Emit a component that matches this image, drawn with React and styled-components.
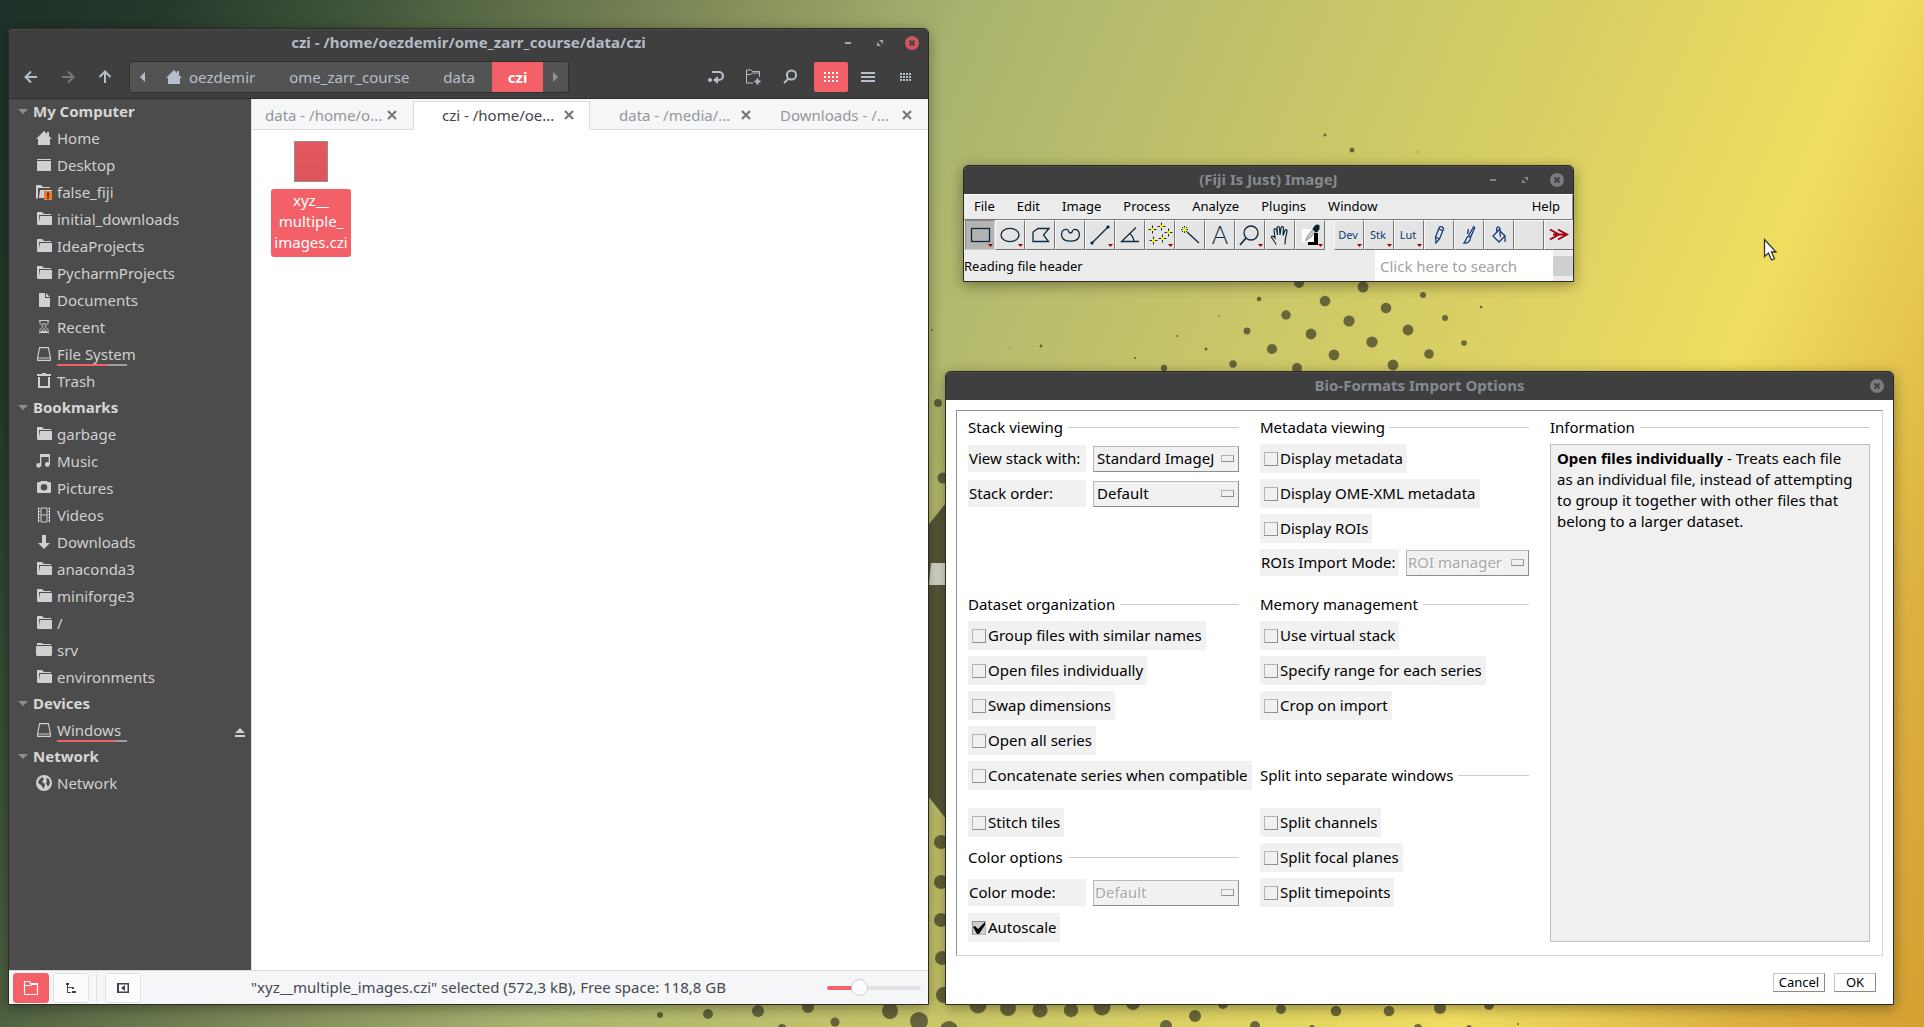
import React from "react";
import styled, { createGlobalStyle, css } from "styled-components";

const RED = "#f46067";
const FONT = '"Noto Sans", "Open Sans", sans-serif';

const GlobalStyle = createGlobalStyle`
  *, *::before, *::after { box-sizing: border-box; }
  body { margin: 0; font-family: ${FONT}; font-size: 15px; }
  button, input, select { font-family: inherit; font-size: inherit; margin: 0; }
  ul { list-style: none; margin: 0; padding: 0; }
  a { color: inherit; text-decoration: none; }
  svg { display: block; flex: none; }
`;

/* ---------- desktop ---------- */

const Desktop = styled.main`
  position: relative;
  height: 100vh;
  overflow: hidden;
  background: linear-gradient(113deg, #1d3128 0%, #25392b 7%, #40543a 15%, #576845 20%, #808b59 30%,
    #a9b36f 41%, #c3c36a 55%, #ddd263 70%, #f0dd60 80%, #e6c850 86%, #dcb040 92%, #d5a032 100%);
`;

const Wallpaper = styled.svg`
  position: absolute;
  inset: 0;
`;

const Cursor = styled.svg`
  position: absolute;
  left: 1763px;
  top: 238px;
`;

const DOTS = [
  [1325, 135, 1.5], [1352, 150, 2.5], [1418, 152, 0.7], [1299, 283, 5], [1363, 287, 5.5], [1423, 295, 3],
  [1259, 299, 2.3], [1325, 301, 5.3], [1386, 308, 5.3], [1481, 307, 1.3], [1286, 315, 4.7], [1349, 321, 5.6],
  [1445, 318, 3], [1219, 316, 0.8], [1408, 330, 5.4], [1247, 331, 3.4], [1311, 334, 5.4], [1464, 343, 2.8],
  [1177, 336, 0.9], [1372, 342, 5.6], [1041, 346, 1.4], [1206, 349, 1.5], [1272, 349, 5.1], [1334, 355, 5.4],
  [1429, 354, 4.8], [1135, 358, 1], [1233, 364, 3.7], [1297, 368, 5], [1393, 365, 5.4], [1164, 368, 3.2],
  [1010, 348, 0.6], [932, 330, 1], [938, 403, 4], [943, 478, 5.5], [660, 1015, 3], [708, 1014, 5],
  [758, 1011, 6], [808, 1007, 6], [835, 1022, 4.5], [890, 1011, 8], [919, 1021, 9], [782, 1028, 4],
  [949, 1030, 9], [978, 1005, 8.5], [1008, 1008, 8], [1040, 1010, 7.6], [1071, 1010, 7.2], [1102, 1007, 8.5],
  [1133, 1003, 7], [1166, 1026, 6], [1195, 1016, 6], [1223, 1004, 5], [1255, 1026, 5], [1281, 1009, 5],
  [1336, 1011, 5.3], [1389, 1011, 5.3], [1440, 1008, 6], [1489, 1005, 5], [1518, 1024, 1], [1312, 1028, 3],
  [1418, 1028, 4], [1469, 1028, 3], [941, 842, 7], [941, 882, 7], [941, 920, 7], [942, 958, 7], [944, 995, 8],
];

/* ---------- window chrome ---------- */

const Window = styled.section`
  position: absolute;
  display: flex;
  flex-direction: column;
  border: 1px solid #2b2b24;
  border-radius: 5px 5px 0 0;
  overflow: hidden;
  box-shadow: 0 3px 14px rgba(0, 0, 0, 0.38);
`;

const FileManagerWindow = styled(Window)`
  left: 8px;
  top: 28px;
  bottom: 22px;
  width: min(921px, calc(100% - 16px));
  background: #fff;
`;

const ImageJWindow = styled(Window)`
  left: 963px;
  top: 165px;
  width: 611px;
  background: #ececec;
`;

const DialogWindow = styled(Window)`
  left: 945px;
  right: 30px;
  top: 371px;
  bottom: 22px;
  background: #fff;
`;

const TitleBar = styled.header`
  display: grid;
  grid-template-columns: 1fr auto 1fr;
  align-items: center;
  height: ${(p) => p.$height || 28}px;
  padding: 0 6px ${(p) => (p.$active ? 2 : 0)}px;
  background: #3f3f3f;
  box-shadow: inset 0 1px 0 #4a4a4a;
  color: ${(p) => (p.$active ? "#b4bac6" : "#868a90")};
  flex: none;
`;

const Title = styled.h1`
  grid-column: 2;
  margin: 0;
  padding-bottom: 2px;
  font-size: 15px;
  font-weight: 700;
  line-height: 22px;
  white-space: nowrap;
`;

const WindowButtons = styled.div`
  display: flex;
  justify-content: flex-end;
  gap: 12px;
`;

const PlainButton = styled.button`
  display: flex;
  align-items: center;
  justify-content: center;
  padding: 0;
  border: 0;
  background: none;
  color: inherit;
`;

const WindowButton = styled(PlainButton)`
  width: 20px;
  height: 20px;
`;

function Chrome({ title, active, closeOnly, height }) {
  const c = active ? "#a5a7ab" : "#85878a";
  return (
    <TitleBar $active={active} $height={height}>
      <Title>{title}</Title>
      <WindowButtons>
        {!closeOnly && (
          <>
            <WindowButton aria-label="Minimize">
              <svg width="16" height="16"><rect x="5" y="7" width="6" height="2" fill={c} /></svg>
            </WindowButton>
            <WindowButton aria-label="Maximize">
              <svg width="16" height="16" fill={c}><path d="M7 5h4v4zM5 7v4h4z" /></svg>
            </WindowButton>
          </>
        )}
        <WindowButton aria-label="Close">
          <svg width="16" height="16">
            <circle cx="8" cy="8" r="7" fill={active ? "#cf565d" : "#797b7e"} />
            <path d="M5.5 5.5l5 5M10.5 5.5l-5 5" stroke="#3f3f3f" strokeWidth="1.8" />
          </svg>
        </WindowButton>
      </WindowButtons>
    </TitleBar>
  );
}

/* ---------- file manager ---------- */

const Toolbar = styled.div`
  display: flex;
  align-items: center;
  padding: 3px 6px 5px 3px;
  background: #3f3f3f;
  border-bottom: 1px solid #2d2d2d;
  color: #b7becb;
  flex: none;
`;

const NavButton = styled(PlainButton)`
  width: 37px;
  height: 32px;
  color: ${(p) => (p.disabled ? "#75787d" : "inherit")};
`;

const Breadcrumb = styled.nav`
  display: flex;
  height: 32px;
  margin: 0 auto 0 6px;
  border: 1px solid #2f2f2f;
  border-radius: 3px;
  background: #535353;
  overflow: hidden;
`;

const CrumbArrow = styled(PlainButton)`
  width: 25px;
  color: ${(p) => (p.disabled ? "#909399" : "#b7becb")};
`;

const Crumb = styled.a`
  display: flex;
  align-items: center;
  gap: 7px;
  padding: 0 17px 1px;
  line-height: 22px;
  ${(p) => p.$first && css`padding-left: 11px;`}
  ${(p) => p.$current && css`padding: 0 16px 1px; background: ${RED}; color: #fff; font-weight: 700;`}
`;

const ToolGroup = styled.div`
  display: flex;
  gap: 3px;
  margin-left: 7px;
`;

const ToolButton = styled(PlainButton)`
  width: 34px;
  height: 30px;
  border-radius: 2px;
  ${(p) => p.$on && css`background: ${RED}; color: #fff;`}
`;

const FmBody = styled.div`
  display: grid;
  grid-template-columns: 242px 1fr;
  flex: 1;
  min-height: 0;
`;

const Sidebar = styled.nav`
  background: #4c4c4c;
  color: #d0d0d0;
  overflow: hidden;
`;

const GroupTitle = styled.h2`
  display: flex;
  align-items: center;
  gap: 5px;
  height: 26px;
  margin: 0;
  padding: 0 0 2px 9px;
  font-size: 15px;
  line-height: 22px;
  font-weight: 700;
  color: #d6d6d6;
`;

const Place = styled.li`
  display: flex;
  align-items: center;
  justify-content: space-between;
  height: 27px;
  padding: 0 4px 2px 27px;
`;

const PlaceLink = styled.a`
  display: flex;
  align-items: center;
  gap: 5px;
  line-height: 22px;
`;

const PlaceLabel = styled.span`
  position: relative;
`;

const Usage = styled.span`
  position: absolute;
  left: 0;
  bottom: -1px;
  width: 70px;
  height: 2px;
  background: linear-gradient(to right, ${RED} ${(p) => p.$used}%, #9ba0a8 ${(p) => p.$used}%);
`;

const EjectButton = styled(PlainButton)`
  padding-top: 4px;
`;

const Content = styled.div`
  display: flex;
  flex-direction: column;
  min-width: 0;
  border-left: 1px solid #dcdfe3;
`;

const Tabs = styled.div`
  display: grid;
  grid-template-columns: 161fr 177fr 177fr 161fr;
  height: 31px;
  padding-top: 2px;
  background: #f5f6f8;
  flex: none;
`;

const Tab = styled.div`
  display: flex;
  align-items: center;
  justify-content: space-between;
  padding: 0 11px 1px ${(p) => (p.$wide ? 28 : 12)}px;
  border: 1px solid transparent;
  border-bottom-color: #d9dce2;
  color: #93969c;
  min-width: 0;
  ${(p) => p.$active && css`background: #fff; border-color: #d9dce2; border-bottom-color: #fff; color: #3f444d;`}
`;

const TabButton = styled(PlainButton)`
  line-height: 22px;
  white-space: nowrap;
`;

const TabClose = styled(PlainButton)`
  width: 18px;
  height: 18px;
  color: #74777c;
`;

const Files = styled.div`
  flex: 1;
  padding: 11px 19px;
`;

const FileItem = styled.figure`
  display: flex;
  flex-direction: column;
  align-items: center;
  gap: 7px;
  width: 80px;
  margin: 0;
`;

const FileThumb = styled.div`
  width: 34px;
  height: 41px;
  border: 1px solid #8d8f90;
  background: linear-gradient(#e4585f, #dc565c);
`;

const FileName = styled.figcaption`
  width: 80px;
  padding: 1px 0 4px;
  border-radius: 3px;
  background: ${RED};
  color: #fff;
  line-height: 21px;
  text-align: center;
`;

const StatusBar = styled.footer`
  display: flex;
  align-items: center;
  height: 34px;
  padding: 0 7px 0 4px;
  border-top: 1px solid #d5d8dc;
  background: #f5f6f8;
  color: #444951;
  flex: none;
`;

const ToggleButton = styled(PlainButton)`
  width: 36px;
  height: 30px;
  margin-right: 4px;
  border: 1px solid ${(p) => (p.$on ? RED : "#e0e2e6")};
  border-radius: 3px;
  background: ${(p) => (p.$on ? RED : "#fcfcfd")};
  color: ${(p) => (p.$on ? "#fff" : "#3f444d")};
`;

const Divider = styled.span`
  width: 1px;
  height: 28px;
  margin: 0 8px 0 3px;
  background: #dcdfe3;
`;

const StatusText = styled.p`
  flex: 1;
  margin: 0 0 0 106px;
  padding-bottom: 2px;
  line-height: 22px;
`;

const Slider = styled.input`
  appearance: none;
  width: 94px;
  height: 18px;
  background: none;
  &::-webkit-slider-runnable-track {
    height: 4px;
    border-radius: 2px;
    background: linear-gradient(to right, ${RED} 34%, #e2e3e5 34%);
  }
  &::-webkit-slider-thumb {
    appearance: none;
    width: 17px;
    height: 17px;
    margin-top: -7px;
    border: 1px solid #c9ccd1;
    border-radius: 50%;
    background: #fdfdfd;
  }
`;

const HomeGlyph = () => (
  <svg width="16" height="16" fill="currentColor"><path d="M8 1L0 9h2v6h12V9h2l-3-3V2h-2v2z" /></svg>
);

const placeIcons = {
  home: <HomeGlyph />,
  desktop: (
    <svg width="16" height="16" fill="currentColor"><path d="M1 2h14v1H1zM1 4h14v10H1z" /></svg>
  ),
  warn: (
    <svg width="16" height="16" fill="currentColor">
      <path d="M0 1h5l2 2h7v1H2v10l-2 1zM4 6h12v8H3z" />
      <rect x="8" y="7" width="8" height="9" fill="#ef7a2d" />
      <path d="M11 8.5h2v4h-2zM11 13.3h2v1.4h-2z" fill="#4c3020" />
    </svg>
  ),
  folder: (
    <svg width="16" height="16" fill="currentColor"><path d="M1 1h5l2 2h7v1H3v10H2l-1-1zM4 5h12v8.5l-.5.5H2.5z" /></svg>
  ),
  closed: (
    <svg width="16" height="16" fill="currentColor"><path d="M1 1h5l1 1h8v1H1zM0 4h16v9l-1 1H1l-1-1z" /></svg>
  ),
  doc: (
    <svg width="16" height="16" fill="currentColor"><path d="M3 1h6v5h5v9H3zM10 1l4 4h-4z" /></svg>
  ),
  recent: (
    <svg width="16" height="16" fill="none" stroke="currentColor" strokeWidth="1">
      <path d="M3 1.500h10M3 13.500h10M4 2v2.500l3 3-3 3V13M12 2v2.500l-3 3 3 3V13" /><path d="M6 5h4M5.500 12.500L8 9.500l2.500 3z" />
    </svg>
  ),
  drive: (
    <svg width="16" height="16" fill="none" stroke="currentColor" strokeWidth="1.1">
      <path d="M3.6 1.6h8.8l2 10v2.8H1.6v-2.8zM1.6 12h12.8" />
    </svg>
  ),
  trash: (
    <svg width="16" height="16" fill="currentColor"><path d="M6 0h4v1h5v2H1V1h5zM2 4h2v9h8V4h2v11H2z" /></svg>
  ),
  music: (
    <svg width="16" height="16" fill="currentColor"><path d="M4 1h10v3H5.300v9H4zM12.700 2H14v9h-1.300z" /><circle cx="2.700" cy="12.300" r="2.400" /><circle cx="11.300" cy="11.500" r="2.400" /></svg>
  ),
  camera: (
    <svg width="16" height="16" fill="currentColor"><path fillRule="evenodd" d="M5 1h6l1 1h2l1 1v9l-1 1H2l-1-1V3l1-1h2zM8 4a3.300 3.300 0 100 6.600 3.300 3.300 0 000-6.600z" /></svg>
  ),
  video: (
    <svg width="16" height="16" fill="none" stroke="currentColor">
      <path d="M2.500 .5v15M13.500 .5v15M5 1v14M11 1v14M5 1h6M5 8h6M5 15h6" strokeWidth="1" /><path d="M3.700 1v15M12.300 1v15" strokeDasharray="1 2" />
    </svg>
  ),
  down: (
    <svg width="16" height="16" fill="currentColor"><path d="M6 1h4v8h4l-6 6-6-6h4z" /></svg>
  ),
  globe: (
    <svg width="16" height="16">
      <circle cx="8" cy="8" r="8" fill="currentColor" />
      <path d="M3 5l3-3 2 2-2 3 3 2-1 5-3-4-3-2zM10 3l3 1 1 4-2 4-2-4 1-2z" fill="#4c4c4c" />
    </svg>
  ),
};

const PLACES = [
  {
    title: "My Computer",
    items: [
      ["home", "Home"], ["desktop", "Desktop"], ["warn", "false_fiji"], ["folder", "initial_downloads"],
      ["folder", "IdeaProjects"], ["folder", "PycharmProjects"], ["doc", "Documents"], ["recent", "Recent"],
      ["drive", "File System", 73], ["trash", "Trash"],
    ],
  },
  {
    title: "Bookmarks",
    items: [
      ["folder", "garbage"], ["music", "Music"], ["camera", "Pictures"], ["video", "Videos"], ["down", "Downloads"],
      ["folder", "anaconda3"], ["folder", "miniforge3"], ["folder", "/"], ["closed", "srv"], ["folder", "environments"],
    ],
  },
  { title: "Devices", items: [["drive", "Windows", 83, true]] },
  { title: "Network", items: [["globe", "Network"]] },
];

const TABS = [
  { label: "data - /home/o..." },
  { label: "czi - /home/oe...", active: true, wide: true },
  { label: "data - /media/...", wide: true },
  { label: "Downloads - /..." },
];

const Dots = ({ step, size, cols, rows }) => (
  <svg width={step * cols - step + size} height={step * rows - step + size} fill="currentColor">
    {Array.from({ length: cols * rows }, (_, i) => (
      <rect key={i} x={(i % cols) * step} y={Math.floor(i / cols) * step} width={size} height={size} />
    ))}
  </svg>
);

function FileManager() {
  return (
    <FileManagerWindow aria-label="File manager">
      <Chrome title="czi - /home/oezdemir/ome_zarr_course/data/czi" active height={29} />
      <Toolbar>
        <NavButton aria-label="Back">
          <svg width="16" height="16" fill="none" stroke="currentColor" strokeWidth="2"><path d="M14 8H3M8 2.500L2.500 8 8 13.500" /></svg>
        </NavButton>
        <NavButton aria-label="Forward" disabled>
          <svg width="16" height="16" fill="none" stroke="currentColor" strokeWidth="2"><path d="M2 8h11M8 2.500L13.500 8 8 13.500" /></svg>
        </NavButton>
        <NavButton aria-label="Up">
          <svg width="16" height="16" fill="none" stroke="currentColor" strokeWidth="2"><path d="M8 14V3M2.500 8L8 2.500 13.500 8" /></svg>
        </NavButton>
        <Breadcrumb aria-label="Path">
          <CrumbArrow aria-label="Scroll left"><svg width="5" height="10" fill="currentColor"><path d="M5 0v10L0 5z" /></svg></CrumbArrow>
          <Crumb href="#oezdemir" $first><HomeGlyph />oezdemir</Crumb>
          <Crumb href="#course">ome_zarr_course</Crumb>
          <Crumb href="#data">data</Crumb>
          <Crumb href="#czi" $current>czi</Crumb>
          <CrumbArrow aria-label="Scroll right" disabled><svg width="5" height="10" fill="currentColor"><path d="M0 0v10l5-5z" /></svg></CrumbArrow>
        </Breadcrumb>
        <ToolGroup>
          <ToolButton aria-label="Toggle location entry">
            <svg width="18" height="16">
              <path d="M5 3h7a4 4 0 010 8h-2" fill="none" stroke="currentColor" strokeWidth="2.200" />
              <path d="M11 7v8l-5-4z" fill="currentColor" /><circle cx="3" cy="11" r="2" fill="currentColor" />
            </svg>
          </ToolButton>
          <ToolButton aria-label="New folder">
            <svg width="16" height="16" fill="none" stroke="currentColor">
              <path d="M14.500 8V2.500h-7l-1-1.500H1.500v13H8M1.500 5.500h4l2-1.500h7" /><path d="M9.500 12.500h6M12.500 9.500v6" strokeWidth="2" />
            </svg>
          </ToolButton>
          <ToolButton aria-label="Search">
            <svg width="16" height="16" fill="none" stroke="currentColor" strokeWidth="2"><circle cx="9.500" cy="6" r="4.600" /><path d="M6.500 9.500L2 14" /></svg>
          </ToolButton>
        </ToolGroup>
        <ToolGroup>
          <ToolButton aria-label="Icon view" $on><Dots step={4} size={2} cols={4} rows={3} /></ToolButton>
          <ToolButton aria-label="List view">
            <svg width="14" height="12" fill="currentColor"><path d="M0 1h14v2H0zM0 5h14v2H0zM0 9h14v2H0z" /></svg>
          </ToolButton>
          <ToolButton aria-label="Compact view"><Dots step={3} size={2} cols={4} rows={3} /></ToolButton>
        </ToolGroup>
      </Toolbar>
      <FmBody>
        <Sidebar aria-label="Places">
          {PLACES.map((group) => (
            <React.Fragment key={group.title}>
              <GroupTitle>
                <svg width="10" height="5" fill="#8f8f8f"><path d="M0 0h10L5 5z" /></svg>
                {group.title}
              </GroupTitle>
              <ul>
                {group.items.map(([icon, label, used, eject]) => (
                  <Place key={label}>
                    <PlaceLink href="#place">
                      {placeIcons[icon]}
                      <PlaceLabel>{label}{used && <Usage $used={used} />}</PlaceLabel>
                    </PlaceLink>
                    {eject && (
                      <EjectButton aria-label="Eject">
                        <svg width="14" height="12" fill="currentColor"><path d="M7 2l5 5H2zM2 9h10v2H2z" /></svg>
                      </EjectButton>
                    )}
                  </Place>
                ))}
              </ul>
            </React.Fragment>
          ))}
        </Sidebar>
        <Content>
          <Tabs>
            {TABS.map((t) => (
              <Tab key={t.label} $active={t.active} $wide={t.wide}>
                <TabButton>{t.label}</TabButton>
                <TabClose aria-label="Close tab">
                  <svg width="10" height="10" stroke="currentColor" strokeWidth="2.200"><path d="M1 1l8 8M9 1L1 9" /></svg>
                </TabClose>
              </Tab>
            ))}
          </Tabs>
          <Files>
            <FileItem>
              <FileThumb />
              <FileName>xyz__<br />multiple_<br />images.czi</FileName>
            </FileItem>
          </Files>
        </Content>
      </FmBody>
      <StatusBar>
        <ToggleButton $on aria-label="Places">
          <svg width="16" height="16" fill="none" stroke="currentColor"><path d="M1.500 1.500h5l1 2h7v11h-13zM1.500 5.500h6l1-1h6" strokeWidth="1.200" /></svg>
        </ToggleButton>
        <ToggleButton aria-label="Tree">
          <svg width="12" height="12" fill="currentColor"><path d="M1 1h3v2H3v2h3v1H3v4h3v1H2V3H1zM7 5h2v2H7zM7 9h4v2H7zM6 5h2v1H6z" /></svg>
        </ToggleButton>
        <Divider />
        <ToggleButton aria-label="Hide sidebar">
          <svg width="12" height="12" fill="currentColor"><path fillRule="evenodd" d="M0 1h12v10H0zM2 2.500v7h8.500v-7zM8 3v6L4 6z" /></svg>
        </ToggleButton>
        <StatusText>"xyz__multiple_images.czi" selected (572,3 kB), Free space: 118,8 GB</StatusText>
        <Slider type="range" min="0" max="100" defaultValue="31" aria-label="Zoom" />
      </StatusBar>
    </FileManagerWindow>
  );
}

/* ---------- ImageJ ---------- */

const MenuBar = styled.nav`
  display: flex;
  align-items: center;
  gap: 22px;
  height: 26px;
  padding: 0 12px 2px 10px;
  border-top: 1px solid #fff;
  border-bottom: 1px solid #7c7c7c;
  border-right: 1px solid #8c8c8c;
`;

const MenuButton = styled(PlainButton)`
  font-size: 13px;
  line-height: 20px;
  color: #000;
  &:last-child { margin-left: auto; }
`;

const ToolRow = styled.div`
  display: flex;
  padding-left: 1px;
  overflow: hidden;
`;

const IjTool = styled(PlainButton)`
  width: 30px;
  height: 30px;
  flex: none;
  border: 1px solid;
  border-color: ${(p) => (p.$on ? "#8a8a8a #d0d0d0 #d0d0d0 #8a8a8a" : "#f8f8f8 #777 #777 #f8f8f8")};
  background: ${(p) => (p.$on ? "#b3b3b3" : "#e4e4e4")};
`;

const ToolGap = styled.span`
  width: 9px;
  flex: none;
`;

const IjStatus = styled.footer`
  display: flex;
  align-items: center;
  height: 31px;
`;

const IjMessage = styled.p`
  flex: 1;
  margin: 0;
  font-size: 13px;
  line-height: 20px;
  color: #000;
`;

const SearchBox = styled.input`
  width: 178px;
  height: 31px;
  padding: 0 5px;
  border: 0;
  background: #fff;
  &::placeholder { color: #a2a2a2; opacity: 1; }
`;

const ProgressStub = styled.span`
  width: 20px;
  height: 20px;
  border-radius: 2px;
  background: #cfcfcf;
`;

const Pluses = [[6, 8], [15, 5], [22, 11], [7, 19], [16, 17]];

const ijIcons = [
  ["Rectangle", <rect x="5.500" y="7.500" width="18" height="13" />, true],
  ["Oval", <ellipse cx="14" cy="14" rx="9" ry="6.700" />, true],
  ["Polygon", <path d="M7 20.500V11l5-3.500h11L17.500 14l5 6.500z" />],
  ["Freehand", <path d="M11 8.500C6 7.500 4.500 13 6 16c2 5.500 15 5.500 17 0 1.500-4-1-8.500-5-7.500-2.500 1-1 3.500-3.500 3.500S13.500 9.500 11 8.500z" />],
  ["Line", <g><path d="M6 22L22 6" /><path d="M5 21h2v2H5zM21 5h2v2h-2z" fill="#0c2a40" strokeWidth="1" /></g>, true],
  ["Angle", <path d="M20 6.500L5.500 20.500H23M14 13c2.500 1.500 3.500 4 4 7.500" />],
  ["Points", <g strokeWidth="1">{Pluses.map(([x, y]) => <g key={x}><path d={`M${x - 3.500} ${y + 0.5}h8M${x + 0.5} ${y - 3.500}v8`} /><rect x={x - 1} y={y - 1} width="3" height="3" fill="#ffec00" stroke="none" /></g>)}</g>, true],
  ["Wand", <g><path d="M11 11l12 11" /><path d="M8.500 5v7M5 8.500h7M6 6l5 5M11 6l-5 5" strokeWidth="1" /><circle cx="8.500" cy="8.500" r="2" fill="#ffec00" stroke="none" /></g>],
  ["Text", <text x="14" y="23" textAnchor="middle" fontSize="25" fontWeight="300" fontFamily="Lato, sans-serif" fill="#0c2a40" stroke="none">A</text>],
  ["Zoom", <g><circle cx="15" cy="12" r="7" /><path d="M10 17l-6 7" strokeWidth="1.700" /></g>, true],
  ["Hand", <path d="M10 23.500c-1-3-3-4.500-4.500-7-.5-2 1.500-2 3.500.5L8 9c0-2 2-2 2.500 0l1 5-.5-7c0-2 2.500-2 2.500 0l.5 7 1-7c.5-2 2.500-1.500 2.500 0l-.5 7.500 2-5c1-1.500 2.500-.5 2 1L19.500 17l-.5 6.500" strokeWidth="1.200" />],
  ["Picker", <g stroke="none"><path d="M12 12h10v12H12z" fill="#000" /><path d="M6 8h12v13H6z" fill="#fff" /><path d="M9.500 20l2.500-6 6-7 3 2-6 7z" fill="#c8c8c8" stroke="#666" strokeWidth=".6" /><path d="M16.500 8l2-3 2-1.500 3 .5v4l-2 3-2 .5z" fill="#06202f" /></g>, true],
];

const PLUGIN_TOOLS = [
  ["Dev", true], ["Stk", true], ["Lut", true],
  ["Pencil", false, <path d="M11 22l-.5-6 4-10c2-1 3.500 0 4 2l-4 10zM10.500 16l4 2M14 8l4 2" />],
  ["Brush", false, <path d="M19 5L13.500 15l2 1.500L20 6M13 15.500c-2 1-2 4-4 6.500 3 .5 6-1 6.500-5M13.500 8l-1 5" />],
  ["Flood filler", false, <path d="M8 15l6-6 6 6-6 6zM12 12c-2-8 4-8 3-1v4M18 13c3 1 2 5 2 8M15 15.500h1" />],
];

function ToolSvg({ children, menu, color = "#0c2a40" }) {
  return (
    <svg width="28" height="28" fill="none" stroke={color} strokeWidth="1.300">
      {children}
      {menu && <path d="M22 23h5l-2.500 3z" fill="#a00000" stroke="none" />}
    </svg>
  );
}

function ImageJ() {
  return (
    <ImageJWindow aria-label="ImageJ">
      <Chrome title="(Fiji Is Just) ImageJ" />
      <MenuBar>
        {["File", "Edit", "Image", "Process", "Analyze", "Plugins", "Window", "Help"].map((m) => (
          <MenuButton key={m}>{m}</MenuButton>
        ))}
      </MenuBar>
      <ToolRow>
        {ijIcons.map(([name, shape, menu], i) => (
          <IjTool key={name} aria-label={name} $on={i === 0}><ToolSvg menu={menu}>{shape}</ToolSvg></IjTool>
        ))}
        <ToolGap />
        {PLUGIN_TOOLS.map(([name, menu, shape]) => (
          <IjTool key={name} aria-label={name}>
            <ToolSvg menu={menu} color="#123b78">
              {shape || <text x="13" y="18" textAnchor="middle" fontSize="11" fill="#123b78" stroke="none">{name}</text>}
            </ToolSvg>
          </IjTool>
        ))}
        <IjTool aria-label="Empty slot" />
        <IjTool aria-label="More tools">
          <svg width="28" height="28" fill="none" stroke="#a80010" strokeWidth="2"><path d="M5 8.500l9 5-9 5M13 8.500l9 5-9 5M8 13.500h14" /></svg>
        </IjTool>
      </ToolRow>
      <IjStatus>
        <IjMessage>Reading file header</IjMessage>
        <SearchBox aria-label="Search" placeholder="Click here to search" />
        <ProgressStub />
      </IjStatus>
    </ImageJWindow>
  );
}

/* ---------- Bio-Formats dialog ---------- */

const DialogBody = styled.form`
  display: flex;
  flex-direction: column;
  flex: 1;
  padding: 10px 10px 12px;
  color: #000;
`;

const Frame = styled.div`
  display: grid;
  grid-template-columns: 271fr 269fr 320fr;
  grid-template-rows: auto auto auto;
  align-content: start;
  gap: 18px 21px;
  flex: 1;
  padding: 6px 12px 12px 11px;
  border: 1px solid;
  border-color: #929292 #d9d9d9 #d9d9d9 #929292;
`;

const Section = styled.div`
  display: flex;
  flex-direction: column;
  align-items: flex-start;
  gap: 6px;
  min-width: 0;
`;

const InfoSection = styled(Section)`
  grid-column: 3;
  grid-row: 1 / 4;
`;

const Heading = styled.h2`
  display: flex;
  align-items: center;
  gap: 5px;
  align-self: stretch;
  height: ${(p) => (p.$row ? 29 : 21)}px;
  margin: ${(p) => (p.$push ? "auto" : 0)} 0 0;
  font-size: 15px;
  font-weight: 400;
  line-height: 21px;
  white-space: nowrap;
  &::after { content: ""; flex: 1; height: 1px; background: #cbcbcb; }
`;

const CheckLabel = styled.label`
  display: flex;
  align-items: center;
  gap: 2px;
  height: 29px;
  padding: 0 4px;
  background: #f1f1f1;
  white-space: nowrap;
`;

const CheckText = styled.span`
  padding-bottom: 2px;
`;

const CheckWrap = styled.span`
  position: relative;
  display: flex;
  svg { position: absolute; left: 0; top: 0; pointer-events: none; }
`;

const CheckInput = styled.input`
  appearance: none;
  width: 14px;
  height: 14px;
  border: 1px solid;
  border-color: #b4b4b4 #8f8f8f #8f8f8f #b4b4b4;
  &:checked { background: #cfcfcf; border-color: #8f8f8f #b4b4b4 #b4b4b4 #8f8f8f; }
`;

const FormRow = styled.div`
  display: grid;
  grid-template-columns: ${(p) => (p.$tight ? "139px 1fr" : "118px 1fr")};
  gap: 7px;
  align-items: center;
  align-self: stretch;
  height: ${(p) => (p.$tight ? 27 : 29)}px;
`;

const FormLabel = styled.label`
  height: 27px;
  padding: 0 0 1px 1px;
  background: #f1f1f1;
  line-height: 26px;
  white-space: nowrap;
`;

const SelectWrap = styled.div`
  position: relative;
  min-width: 0;
  &::after {
    content: "";
    position: absolute;
    right: 5px;
    top: 9px;
    width: 13px;
    height: 7px;
    border: 1px solid;
    border-color: #b4b4b4 #8f8f8f #8f8f8f #b4b4b4;
    pointer-events: none;
  }
`;

const Select = styled.select`
  appearance: none;
  display: block;
  width: 100%;
  height: 26px;
  padding: 0 0 1px 3px;
  border: 1px solid;
  border-color: #b8b8b8 #8c8c8c #8c8c8c #b8b8b8;
  border-radius: 0;
  background: #f1f1f1;
  color: #000;
  &:disabled { color: #a9a9a9; opacity: 1; text-shadow: 1px 1px 0 #fff; padding: 0 0 2px 1px; }
`;

const InfoBox = styled.p`
  flex: 1;
  align-self: stretch;
  margin: 0;
  padding: 3px 14px 3px 6px;
  border: 1px solid #c0c0c0;
  background: #f0f0f0;
  line-height: 21px;
`;

const DialogFooter = styled.footer`
  display: flex;
  justify-content: flex-end;
  gap: 9px;
  padding: 17px 7px 0 0;
`;

const DialogButton = styled.button`
  width: ${(p) => p.$width}px;
  height: 19px;
  padding: 0;
  border: 1px solid;
  border-color: #c4c4c4 #8a8a8a #8a8a8a #c4c4c4;
  background: #fff;
  color: #000;
  font-size: 13px;
  line-height: 17px;
`;

function Check({ label, checked }) {
  return (
    <CheckLabel>
      <CheckWrap>
        <CheckInput type="checkbox" defaultChecked={checked} />
        {checked && <svg width="14" height="14"><path d="M1 6l2-1 3 3 7-7v3l-6 9H5z" fill="#000" /></svg>}
      </CheckWrap>
      <CheckText>{label}</CheckText>
    </CheckLabel>
  );
}

function Choice({ id, label, value, disabled, tight }) {
  return (
    <FormRow $tight={tight}>
      <FormLabel htmlFor={id}>{label}</FormLabel>
      <SelectWrap>
        <Select id={id} disabled={disabled} defaultValue={value}><option>{value}</option></Select>
      </SelectWrap>
    </FormRow>
  );
}

function ImportDialog() {
  return (
    <DialogWindow role="dialog" aria-label="Bio-Formats Import Options">
      <Chrome title="Bio-Formats Import Options" closeOnly />
      <DialogBody onSubmit={(e) => e.preventDefault()}>
        <Frame>
          <Section>
            <Heading>Stack viewing</Heading>
            <Choice id="view" label="View stack with:" value="Standard ImageJ" />
            <Choice id="order" label="Stack order:" value="Default" />
          </Section>
          <Section>
            <Heading>Metadata viewing</Heading>
            <Check label="Display metadata" />
            <Check label="Display OME-XML metadata" />
            <Check label="Display ROIs" />
            <Choice id="rois" label="ROIs Import Mode:" value="ROI manager" disabled tight />
          </Section>
          <InfoSection>
            <Heading>Information</Heading>
            <InfoBox><b>Open files individually</b> - Treats each file as an individual file, instead of attempting to group it together with other files that belong to a larger dataset.</InfoBox>
          </InfoSection>
          <Section>
            <Heading>Dataset organization</Heading>
            <Check label="Group files with similar names" />
            <Check label="Open files individually" />
            <Check label="Swap dimensions" />
            <Check label="Open all series" />
            <Check label="Concatenate series when compatible" />
          </Section>
          <Section>
            <Heading>Memory management</Heading>
            <Check label="Use virtual stack" />
            <Check label="Specify range for each series" />
            <Check label="Crop on import" />
            <Heading $row $push>Split into separate windows</Heading>
          </Section>
          <Section>
            <Check label="Stitch tiles" />
            <Heading $row>Color options</Heading>
            <Choice id="mode" label="Color mode:" value="Default" disabled />
            <Check label="Autoscale" checked />
          </Section>
          <Section>
            <Check label="Split channels" />
            <Check label="Split focal planes" />
            <Check label="Split timepoints" />
          </Section>
        </Frame>
        <DialogFooter>
          <DialogButton type="button" $width={52}>Cancel</DialogButton>
          <DialogButton type="submit" $width={42}>OK</DialogButton>
        </DialogFooter>
      </DialogBody>
    </DialogWindow>
  );
}

export default function App() {
  return (
    <Desktop>
      <GlobalStyle />
      <Wallpaper width="1924" height="1027" aria-hidden="true">
        <path d="M950 498L900 560v200l50 64z" fill="#59583a" />
        <path d="M931 563h20v22h-22z" fill="#dcdccb" />
        <g fill="#3c3b28" fillOpacity=".7">
          {DOTS.map(([x, y, r]) => <circle key={`${x}-${y}`} cx={x} cy={y} r={r} />)}
        </g>
      </Wallpaper>
      <FileManager />
      <ImageJ />
      <ImportDialog />
      <Cursor width="14" height="24" aria-hidden="true">
        <path d="M1.500 1.500v17l4-3.500 3 7 3-1.300-3-6.700H13z" fill="#fff" stroke="#333" strokeWidth="1.300" />
      </Cursor>
    </Desktop>
  );
}
